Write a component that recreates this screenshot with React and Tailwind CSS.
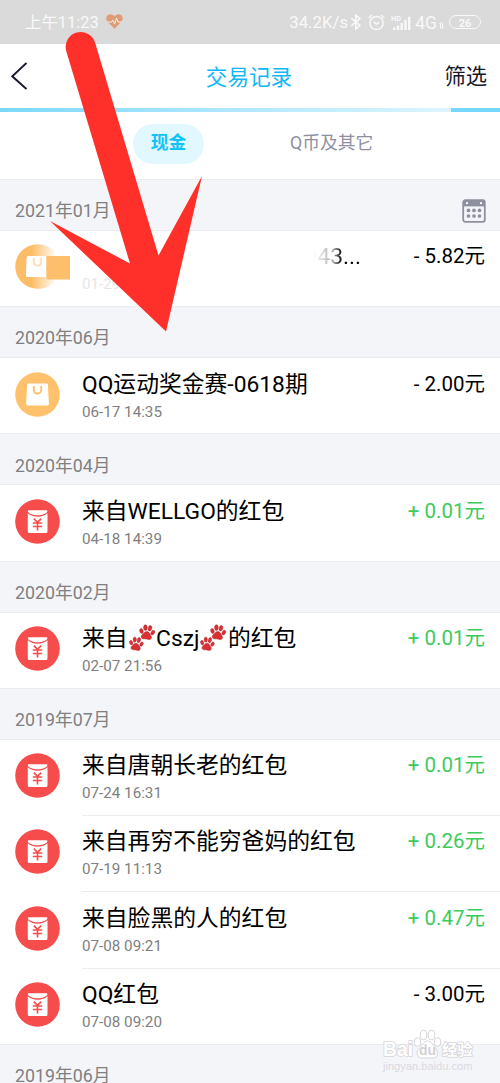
import React from 'react';
import { clsx } from 'clsx';

const sections = [
    {
        month: '2021年01月',
        calendar: true,
        items: [{ icon: 'erased', title: '20210943...', time: '01-29', amount: '- 5.82元' }],
    },
    {
        month: '2020年06月',
        items: [{ icon: 'bag', title: 'QQ运动奖金赛-0618期', time: '06-17 14:35', amount: '- 2.00元' }],
    },
    {
        month: '2020年04月',
        items: [{ icon: 'packet', title: '来自WELLGO的红包', time: '04-18 14:39', amount: '+ 0.01元' }],
    },
    {
        month: '2020年02月',
        items: [{ icon: 'packet', title: <>来自<Paws />Cszj<Paws />的红包</>, time: '02-07 21:56', amount: '+ 0.01元' }],
    },
    {
        month: '2019年07月',
        items: [
            { icon: 'packet', title: '来自唐朝长老的红包', time: '07-24 16:31', amount: '+ 0.01元' },
            { icon: 'packet', title: '来自再穷不能穷爸妈的红包', time: '07-19 11:13', amount: '+ 0.26元' },
            { icon: 'packet', title: '来自脸黑的人的红包', time: '07-08 09:21', amount: '+ 0.47元' },
            { icon: 'packet', title: 'QQ红包', time: '07-08 09:20', amount: '- 3.00元' },
        ],
    },
    { month: '2019年06月', items: [] },
];

function Paw({ transform }) {
    return (
        <g transform={transform}>
            <ellipse cx="-5" cy="-0.6" rx="1.5" ry="2.2" transform="rotate(-25 -5 -0.6)" />
            <ellipse cx="-2" cy="-4" rx="1.6" ry="2.5" transform="rotate(-8 -2 -4)" />
            <ellipse cx="2" cy="-4" rx="1.6" ry="2.5" transform="rotate(8 2 -4)" />
            <ellipse cx="5" cy="-0.6" rx="1.5" ry="2.2" transform="rotate(25 5 -0.6)" />
            <path d="M0-.8C2-.8 2.4 1 3.8 2.4 5.3 4 4.2 6.3 2 5.9 .8 5.6-.8 5.6-2 5.9-4.2 6.3-5.3 4-3.8 2.4-2.4 1-2-.8 0-.8Z" />
        </g>
    );
}

function Paws() {
    return (
        <svg className="mx-[1px] inline-block h-[27px] w-[26.5px] align-[-5px]" viewBox="0 0 26 27" fill="#dc2f34" stroke="#9c2429" strokeWidth=".35">
            <Paw transform="translate(17.8 8.5) rotate(8) scale(1.15)" />
            <Paw transform="translate(7 20) rotate(8) scale(1.05)" />
        </svg>
    );
}

const PacketIcon = () => (
    <svg className="size-[45px]" viewBox="0 0 45 45">
        <circle cx="22.5" cy="22.5" r="22.3" fill="#f74c4c" />
        <path d="M13.8 11.2h17.6q1.1 0 1 1.2c-3 5-16.6 5-19.6 0q-.1-1.2 1-1.2Z" fill="#fff" />
        <path d="M12.8 14.2c4.4 4.6 15.2 4.6 19.7 0v18.4q0 1.5-1.5 1.5H14.3q-1.5 0-1.5-1.5Z" fill="#fff" />
        <path d="m18.8 19.6 3.7 3.8 3.7-3.8M22.5 23v8.4M17.8 24h9.4M17.8 27.5h9.4" fill="none" stroke="#f74c4c" strokeWidth="1.6" />
    </svg>
);

const BagIcon = () => (
    <svg className="size-[45px]" viewBox="0 0 45 45">
        <circle cx="22.5" cy="22.5" r="22.3" fill="#ffc16c" />
        <path d="M13.5 11.5h18q1.3 0 1.4 1.3l1 18.9q0 1.7-1.6 1.7H12.7q-1.6 0-1.6-1.7l1-18.9q.1-1.3 1.4-1.3Z" fill="#fff" />
        <path d="M18.8 14v4a3.7 3.7 0 0 0 7.4 0v-4" fill="none" stroke="#ffc16c" strokeWidth="1.9" />
    </svg>
);

const ErasedIcon = () => (
    <svg className="h-[45px] w-[56px]" viewBox="0 0 56 45">
        <defs>
            <linearGradient id="fade">
                <stop offset=".4" stopColor="#fdbd68" />
                <stop offset="1" stopColor="#fdbd68" stopOpacity="0" />
            </linearGradient>
        </defs>
        <path d="M22.5.2a22.3 22.3 0 1 0 0 44.6C30 44.8 37 42 42 34L39 7Q32 0 22.5.2Z" fill="url(#fade)" />
        <path d="M13 12h18v21H12q-1.2 0-1.1-1.5l.7-18q0-1.5 1.4-1.5Z" fill="#fff" />
        <path d="M18.8 14v4a3.7 3.7 0 0 0 7.4 0v-4" fill="none" stroke="#fddcb0" strokeWidth="1.8" />
        <path d="M31.5 12H55v23.5H31.5Z" fill="#fdbf6b" />
    </svg>
);

const CalendarIcon = () => (
    <svg className="-mt-px h-6 w-6" viewBox="0 0 24 24">
        <rect x="1.2" y="1.2" width="21.6" height="21.6" rx="2" fill="none" stroke="#8e909e" strokeWidth="1.8" />
        <path d="M1.2 2h21.6v5.4H1.2Z" fill="#8e909e" />
        <circle cx="5" cy="4.2" r="1.1" fill="#fff" />
        <circle cx="19" cy="4.2" r="1.1" fill="#fff" />
        {[6.5, 12, 17.5].map((x) => [11.4, 17].map((y) => (
            <circle key={`${x}-${y}`} cx={x} cy={y} r="1.85" fill="#8e909e" />
        )))}
    </svg>
);

const StatusBar = () => (
    <div className="flex h-11 items-center justify-between bg-[#dadada] pt-[2px] pl-[25px] pr-[19px] text-[#f8f8f8]">
        <div className="flex items-center gap-[7px]">
            <span className="text-[16.4px]">上午11:23</span>
            <svg className="mb-[2px] h-[15px] w-[17px]" viewBox="0 0 17 15">
                <path d="M8.5 14.8 1.4 7.5C-1 4.7.5.3 4.2.2 6.2.1 7.6 1.1 8.5 2.4 9.4 1.1 10.8.1 12.8.2c3.7.1 5.2 4.5 2.8 7.3Z" fill="#df9c75" />
                <path d="M1.5 8h4l1.3-2 1.8 4 2-6 1.3 4h4" fill="none" stroke="#eee" strokeWidth="1" />
            </svg>
        </div>
        <div className="flex items-center">
            <span className="w-[61px] text-[16.8px]">34.2K/s</span>
            <svg className="mb-[2px] h-4 w-3" viewBox="0 0 12 16" fill="none" stroke="#f8f8f8" strokeWidth="1.6">
                <path d="m1.2 4.2 8.8 7.2-4.2 3.4V1.2L10 4.6 1.2 11.8" />
            </svg>
            <svg className="mb-[2px] ml-[6px] size-[17px]" viewBox="0 0 17 17" fill="none" stroke="#f8f8f8" strokeWidth="1.5">
                <circle cx="8.5" cy="9" r="6.6" />
                <path d="M.8 4 4 1M16.2 4 13 1M5.8 8.2l2.7 2 2.7-2" />
            </svg>
            <svg className="mb-px ml-[6px] h-4 w-5" viewBox="0 0 20 16" fill="#f8f8f8">
                <text x="0" y="6" fontSize="7.4" fontWeight="bold">HD</text>
                <path d="M2 12.4h2.4V15H2ZM5.8 10.6h2.4V15H5.8ZM9.5 8h2.4v7H9.5ZM13.3 4.8h2.4V15h-2.4ZM17 1.8h2.4V15H17Z" />
            </svg>
            <span className="ml-[4px] text-[17.5px]">4G</span>
            <svg className="ml-[2px] mt-[4px] h-[7px] w-[5px]" viewBox="0 0 5 7" fill="none" stroke="#f8f8f8" strokeWidth="1">
                <path d="M1.5 6.5V.7L.2 2M3.5.5v5.8L4.8 5" />
            </svg>
            <span className="mb-[2px] ml-[5px] flex h-[14px] w-8 items-center justify-center rounded-full border-[1.4px] border-[#f8f8f8] pt-[2px] text-[11px] leading-none font-bold">26</span>
        </div>
    </div>
);

const Header = () => (
    <header className="grid h-16 grid-cols-3 items-center pl-[11px] pr-[13px]">
        <svg className="h-7 w-4" viewBox="0 0 16 28" fill="none" stroke="#17172b" strokeWidth="1.9">
            <path d="M15.5 1 1.3 14.3 15.5 27" />
        </svg>
        <h1 className="pt-[3px] text-center text-[21.6px] leading-8 text-[#12b7f5]">交易记录</h1>
        <span className="pt-[2px] text-right text-[21.3px] leading-8 text-[#17172b]">筛选</span>
    </header>
);

const Row = ({ item, last }) => {
    const erased = item.icon === 'erased';
    return (
        <div className={clsx('flex bg-white pl-[15px]', last ? 'h-[75.2px]' : 'h-[76.3px]')}>
            <div className="w-[67px] shrink-0 pt-[13.4px]">
                {item.icon === 'packet' && <PacketIcon />}
                {item.icon === 'bag' && <BagIcon />}
                {erased && <ErasedIcon />}
            </div>
            <div className={clsx('flex flex-1 justify-between pr-[15px] pt-[10.4px]', !last && 'border-b border-[#ebebed]')}>
                <div className={clsx('whitespace-nowrap', erased && 'w-[279px]')}>
                    <div
                        className={clsx(
                            'h-[31px] text-[22.8px] leading-8 text-black',
                            erased && 'bg-linear-to-r from-transparent from-83% via-[#aaa] via-90% to-black to-94% bg-clip-text text-right text-transparent'
                        )}
                    >
                        {item.title}
                    </div>
                    <div className={clsx('text-[15.2px] leading-6', erased ? 'text-[#e6e6e6]' : 'text-[#808080]')}>{item.time}</div>
                </div>
                <div className={clsx('-mt-px text-[20.5px] leading-8', item.amount[0] === '+' ? 'text-[#3ccb5a]' : 'text-black')}>
                    {item.amount}
                </div>
            </div>
        </div>
    );
};

const Arrow = () => (
    <svg className="pointer-events-none absolute top-0 left-0 h-[340px] w-[210px]" viewBox="0 0 210 340">
        <path d="M66.2 51A14.9 14.9 0 0 1 95.2 43L158.5 255.5 202 176 166 331.5 50 221 130 263.5Z" fill="#ff3029" />
    </svg>
);

const Watermark = () => (
    <div className="absolute top-[1029px] left-[383px] w-[95px] font-['Liberation_Sans','Noto_Sans_CJK_SC',sans-serif] font-bold text-white">
        <div className="flex h-[30px] items-end">
            <span className="w-[30px] text-[19.3px] leading-[18px] [-webkit-text-stroke:1.6px_#d6d6da] [paint-order:stroke_fill]">Bai</span>
            <svg className="h-[30px] w-[29px] shrink-0" viewBox="0 0 29 30" fill="#fff" stroke="#d6d6da" strokeWidth="1">
                <ellipse cx="4.5" cy="13" rx="3.2" ry="4.2" />
                <ellipse cx="10.5" cy="6" rx="3.3" ry="4.7" />
                <ellipse cx="18.5" cy="6" rx="3.3" ry="4.7" />
                <ellipse cx="24.5" cy="13" rx="3.2" ry="4.2" />
                <path d="M14.5 12c4 0 5 4 8 7s3 10-2 10c-4 0-8-.4-12 0-5 0-6-7-2-10s4-7 8-7Z" />
                <text x="6" y="26" fontSize="14" fill="#d2d2d6" stroke="none">du</text>
            </svg>
            <span className="text-[15.3px] leading-[18px] [-webkit-text-stroke:1.6px_#d6d6da] [paint-order:stroke_fill]">经验</span>
        </div>
        <div className="text-[11.1px] leading-[15px] font-normal text-[#dadadf]">jingyan.baidu.com</div>
    </div>
);

export default function App() {
    return (
        <div className="relative h-[1083px] w-[500px] overflow-hidden bg-white font-[Roboto,'Noto_Sans_CJK_SC',sans-serif]">
            <StatusBar />
            <Header />
            <div className="flex h-1">
                <div className="w-[451px] bg-linear-to-r from-[#7bd8fb] to-[#dcf5fe]" />
                <div className="flex-1 bg-[#74d7fb]" />
            </div>
            <nav className="flex h-[67px] items-start pt-[12px] pl-[133px] text-[17.8px] leading-[38px]">
                <span className="h-10 w-[71px] rounded-full bg-[#e1f8ff] text-center font-bold text-[#12c2fb]">现金</span>
                <span className="ml-[86px] text-[#8e90a2]">Q币及其它</span>
            </nav>
            <main>
                {sections.map((section) => (
                    <section key={section.month}>
                        <div className="flex h-[52px] items-center justify-between border-y border-[#ebecef] bg-[#f4f5f9] pt-[13px] pr-[14px] pl-[15px] text-[17.8px] text-[#808080]">
                            {section.month}
                            {section.calendar && <CalendarIcon />}
                        </div>
                        {section.items.map((item, i) => (
                            <Row key={item.time} item={item} last={i === section.items.length - 1} />
                        ))}
                    </section>
                ))}
            </main>
            <Arrow />
            <Watermark />
        </div>
    );
}
